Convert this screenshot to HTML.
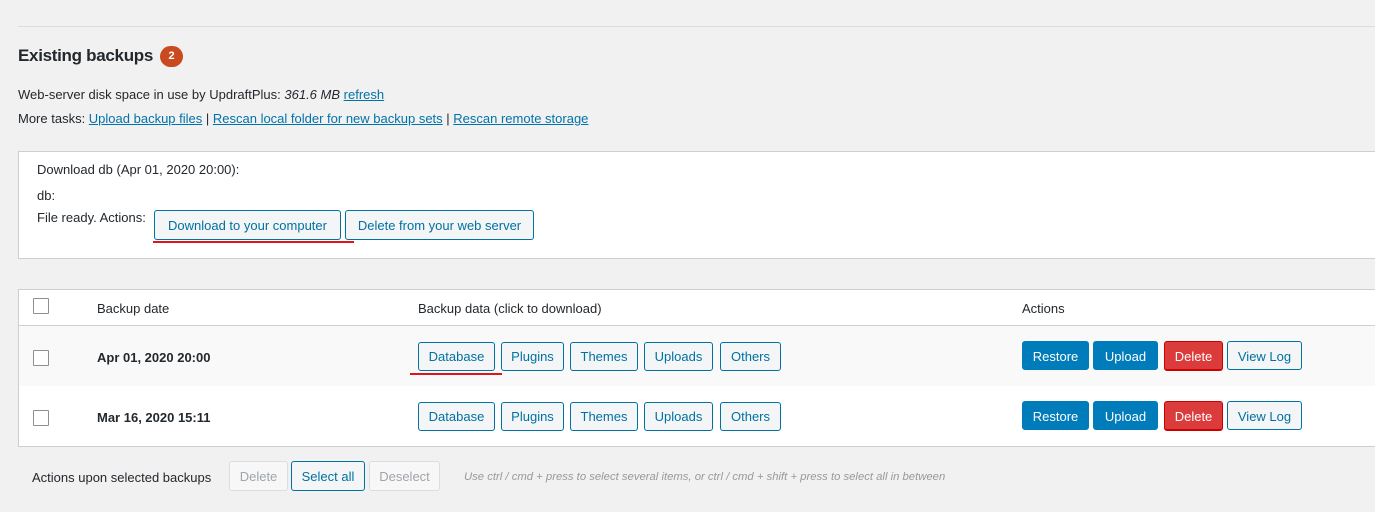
<!DOCTYPE html>
<html><head><style>
*{box-sizing:border-box;margin:0;padding:0}
body{width:1375px;height:512px;background:#f1f1f1;font-family:"Liberation Sans",sans-serif;font-size:13px;color:#23282d;position:relative;overflow:hidden}
.a{position:absolute;white-space:nowrap}
a{color:#0073aa;text-decoration:underline}
.b{position:absolute;height:29px;line-height:28px;border:1px solid #0071a1;border-radius:3px;background:#f3f5f6;color:#0071a1;text-align:center;font-size:13px}
.p{background:#007cba;border-color:#007cba;color:#fff}
.r{background:#dc3b3b;border-color:#c00;color:#fff;border-bottom-width:2px}
.d{border-color:#ddd;color:#a0a5aa;background:#f7f7f7}
.cb{position:absolute;width:16px;height:16px;border:1px solid #8c8f94;background:#fff;border-radius:1px}
</style></head><body>
<div class="a" style="left:18px;top:26px;right:0;height:1px;background:#dcdcde"></div>
<div class="a" style="left:18px;top:46px;font-size:17px;font-weight:bold;letter-spacing:-0.3px;color:#23282d">Existing backups</div>
<div class="a" style="left:160px;top:46px;width:23px;height:21px;border-radius:11px;background:#ca4a1f;color:#fff;font-size:11px;font-weight:bold;text-align:center;line-height:21px">2</div>
<div class="a" style="left:18px;top:87px">Web-server disk space in use by UpdraftPlus: <i>361.6 MB</i> <a>refresh</a></div>
<div class="a" style="left:18px;top:111px">More tasks: <a>Upload backup files</a> | <a>Rescan local folder for new backup sets</a> | <a>Rescan remote storage</a></div>
<div class="a" style="left:18px;top:151px;width:1400px;height:108px;background:#fff;border:1px solid #ccd0d4"></div>
<div class="a" style="left:37px;top:162px">Download db (Apr 01, 2020 20:00):</div>
<div class="a" style="left:37px;top:188px">db:</div>
<div class="a" style="left:37px;top:210px">File ready. Actions:</div>
<div class="b" style="left:154px;top:210px;width:187px;height:30px;line-height:29px">Download to your computer</div>
<div class="b" style="left:345px;top:210px;width:189px;height:30px;line-height:29px">Delete from your web server</div>
<div class="a" style="left:153px;top:241px;width:201px;height:2px;background:#e0141e"></div>

<div class="a" style="left:18px;top:289px;width:1400px;height:158px;background:#fff;border:1px solid #ccd0d4"></div>
<div class="a" style="left:19px;top:325px;width:1400px;height:61px;background:#f9f9f9;border-top:1px solid #ccd0d4"></div>
<div class="cb" style="left:33px;top:298px"></div>
<div class="cb" style="left:33px;top:350px"></div>
<div class="cb" style="left:33px;top:410px"></div>
<div class="a" style="left:97px;top:301px">Backup date</div>
<div class="a" style="left:418px;top:301px">Backup data (click to download)</div>
<div class="a" style="left:1022px;top:301px">Actions</div>
<div class="a" style="left:97px;top:350px;font-weight:bold">Apr 01, 2020 20:00</div>
<div class="a" style="left:97px;top:410px;font-weight:bold">Mar 16, 2020 15:11</div>

<div class="b" style="left:418px;top:342px;width:77px">Database</div>
<div class="b" style="left:501px;top:342px;width:63px">Plugins</div>
<div class="b" style="left:570px;top:342px;width:68px">Themes</div>
<div class="b" style="left:644px;top:342px;width:69px">Uploads</div>
<div class="b" style="left:720px;top:342px;width:61px">Others</div>
<div class="a" style="left:410px;top:373px;width:92px;height:2px;background:#e0141e"></div>
<div class="b" style="left:418px;top:402px;width:77px">Database</div>
<div class="b" style="left:501px;top:402px;width:63px">Plugins</div>
<div class="b" style="left:570px;top:402px;width:68px">Themes</div>
<div class="b" style="left:644px;top:402px;width:69px">Uploads</div>
<div class="b" style="left:720px;top:402px;width:61px">Others</div>

<div class="b p" style="left:1022px;top:341px;width:67px;line-height:30px">Restore</div>
<div class="b p" style="left:1093px;top:341px;width:65px;line-height:30px">Upload</div>
<div class="b r" style="left:1164px;top:341px;width:59px;height:30px;line-height:30px">Delete</div>
<div class="b" style="left:1227px;top:341px;width:75px;line-height:30px">View Log</div>
<div class="b p" style="left:1022px;top:401px;width:67px;line-height:30px">Restore</div>
<div class="b p" style="left:1093px;top:401px;width:65px;line-height:30px">Upload</div>
<div class="b r" style="left:1164px;top:401px;width:59px;height:30px;line-height:30px">Delete</div>
<div class="b" style="left:1227px;top:401px;width:75px;line-height:30px">View Log</div>

<div class="a" style="left:32px;top:470px">Actions upon selected backups</div>
<div class="b d" style="left:229px;top:461px;width:59px;height:30px;line-height:30px">Delete</div>
<div class="b" style="left:291px;top:461px;width:74px;height:30px;line-height:30px">Select all</div>
<div class="b d" style="left:369px;top:461px;width:71px;height:30px;line-height:30px">Deselect</div>
<div class="a" style="left:464px;top:471px;font-size:11.3px;font-style:italic;color:#999">Use ctrl / cmd + press to select several items, or ctrl / cmd + shift + press to select all in between</div>
</body></html>
